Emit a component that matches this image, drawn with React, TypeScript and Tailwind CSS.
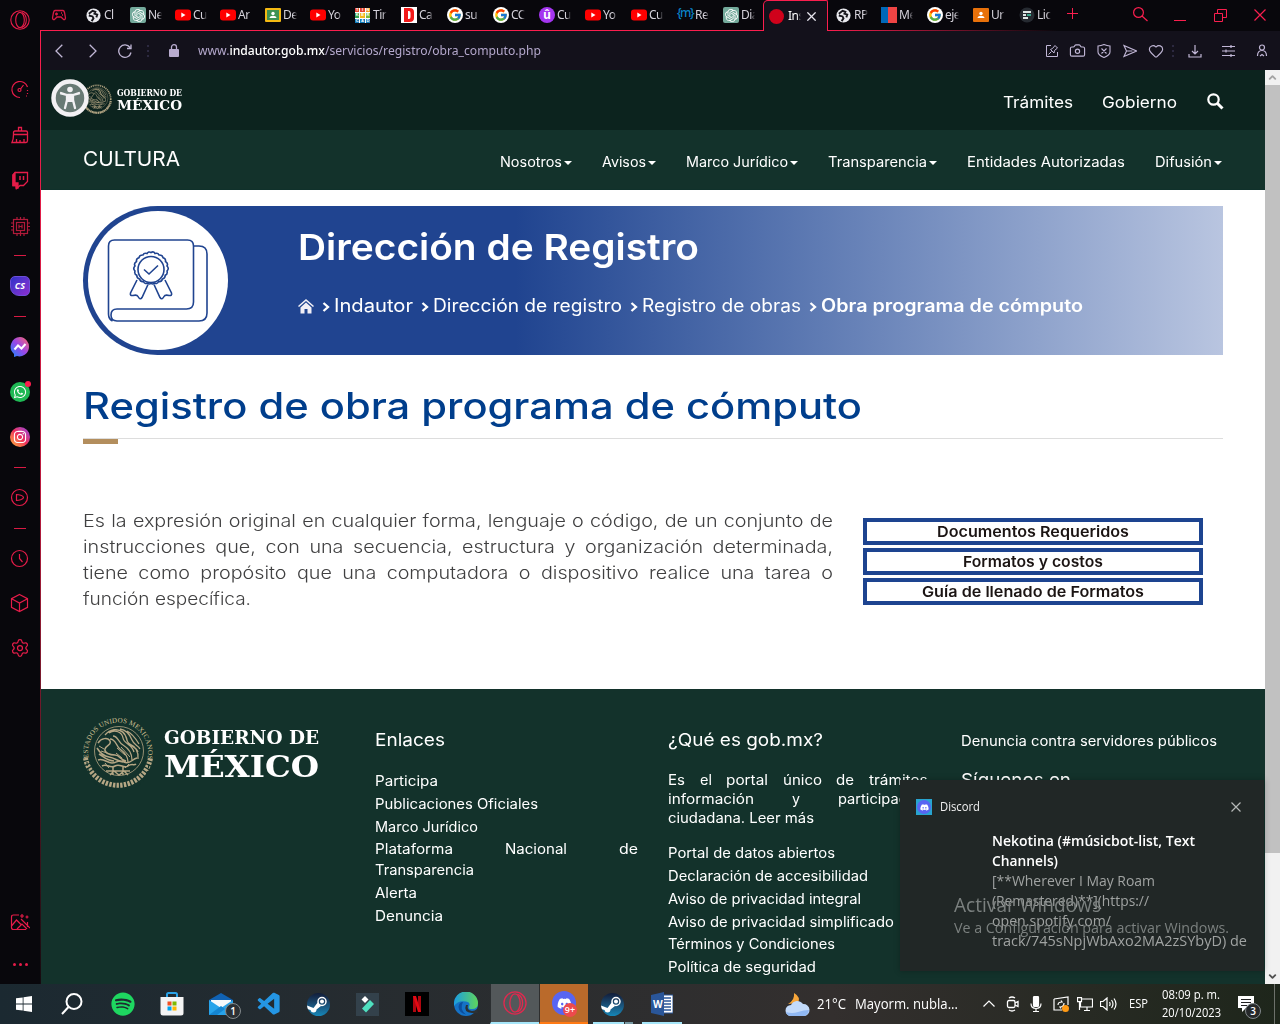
import React, { useLayoutEffect, useRef, useState } from 'react';
import { FaWhatsapp, FaInstagram, FaDiscord, FaSpotify } from 'react-icons/fa';
import { FcGoogle } from 'react-icons/fc';
import { SiOpenai } from 'react-icons/si';
import { VscVscode } from 'react-icons/vsc';
import { Box, Clock, Settings, Search, X, Plus, Heart, Camera, ChevronUp, ChevronDown } from 'lucide-react';

type Kids = { className?: string; children?: React.ReactNode };

/* One line of text stretched horizontally to the width of its box. */
function Fit({ className = '', children }: Kids) {
  const outer = useRef<HTMLSpanElement>(null);
  const inner = useRef<HTMLSpanElement>(null);
  const [k, setK] = useState(1);
  useLayoutEffect(() => {
    if (outer.current && inner.current && inner.current.offsetWidth > 0) {
      setK(outer.current.clientWidth / inner.current.getBoundingClientRect().width);
    }
  }, []);
  return (
    <span ref={outer} className={`block shrink-0 whitespace-nowrap ${className}`}>
      <span ref={inner} className="inline-block origin-left" style={{ transform: `scaleX(${k})` }}>{children}</span>
    </span>
  );
}

const OperaRing = ({ className = '' }: Kids) => (
  <svg viewBox="0 0 20 20" className={className} fill="none" stroke="currentColor" strokeWidth="1.1">
    <circle cx="10" cy="10" r="9.2" />
    <ellipse cx="10" cy="10" rx="4.3" ry="7.6" />
    <path d="M12 2.6c3 1.2 4.3 4.300 4.300 7.400s-1.300 6.200-4.300 7.400" />
  </svg>
);

const Seal = ({ className = '', words = false }: { className?: string; words?: boolean }) => (
  <svg viewBox="0 0 70 70" className={className} fill="none" stroke="#b5a684" strokeWidth="1">
    <defs><path id="rim" d="M5.500 40A30 30 0 1 1 64.500 40" /></defs>
    {words ? (
      <text fill="#d6c396" stroke="none" fontFamily="Liberation Serif" fontSize="7" textLength="106">
        <textPath href="#rim">ESTADOS UNIDOS MEXICANOS</textPath>
      </text>
    ) : <circle cx="35" cy="35" r="32" strokeWidth="4" strokeDasharray="2.500 2" />}
    <path d="M2.500 40A33 33 0 0 0 67.500 40" strokeWidth="5" strokeDasharray="2.400 1.300" />
    <path d="M4 44A31 31 0 0 0 66 44" stroke="#13322b" strokeWidth="1.200" strokeDasharray="4 3" />
    <circle cx="36" cy="33" r="24.500" strokeWidth=".8" />
    <path d="M22 17c5-6 13-7 18-3s2 10 7 12 9 8 8 15M26 15c6-4 13-1 14 5s9 6 11 14M31 12c7-1 12 4 13 10s9 6 11 12M37 11c7 1 10 6 12 11s6 5 8 9M30 18c5 0 5 6 10 9s9 8 9 15M27 21c6 0 6 7 10 10s8 7 8 13M44 13c6 3 9 8 12 13" strokeWidth="1.300" />
    <path d="M15 25c3-5 10-6 12-2s-4 4-5 8 5 6 10 6 5 5 11 6M14 30c3 5 6 8 12 9s8 4 14 5M16 36c5 3 8 7 15 7M15 42c6-2 9 3 14 3s6-4 12-1 8-3 13-4M19 48c5-3 8 3 13 0s9 3 13 0 6 0 8-2M23 53h24M27 57l4-4 5 4 5-4 4 4M30 49v8M40 49v8" strokeWidth="1.500" />
    <path d="M16 28l5 3M18 33l6 2M34 30l8 7M38 29l9 10M33 35l6 5M22 45l4 5M46 46l-4 4" />
  </svg>
);

const Rail = 'shrink-0 h-5 w-5 flex items-center justify-center';
const Dash = ({ className = '' }: Kids) => <i className={`block h-px w-3 shrink-0 bg-[#d81a44] ${className}`} />;

function Sidebar() {
  return (
    <aside className="flex w-10 shrink-0 flex-col items-center bg-[#08070c] pt-[10px] text-[#e51c49]">
      <div className={Rail}><OperaRing className="h-5 w-5" /></div>
      <div className={`${Rail} mt-[50px]`}>
        <svg viewBox="0 0 20 20" className="h-5 w-5" fill="none" stroke="currentColor" strokeWidth="1.200"><path d="M10 17.500A8 8 0 1 1 17.500 7" /><circle cx="9.500" cy="10" r="1.500" /><path d="M10.500 9l3-4M17.500 10v1M17.500 13v1M16 16h1" /></svg>
      </div>
      <div className={`${Rail} mt-[25px]`}>
        <svg viewBox="0 0 20 20" className="h-5 w-5" fill="none" stroke="currentColor" strokeWidth="1.300"><path d="M8.500 6V2.500h3V6M3.500 9.500V7.500q0-1.500 1.500-1.500h11q1.500 0 1.500 1.500v2zM3.500 9.500q0 5-1.500 8h14q1.500 0 1.500-2v-6M6.500 14v3.500M10 15v2.500M14 14v3.500" /></svg>
      </div>
      <div className={`${Rail} mt-[25px]`}>
        <svg viewBox="0 0 20 20" className="h-5 w-5" fill="none" stroke="currentColor" strokeWidth="1.300"><path d="M5 2.500h12.500v9l-4 4H10L6.500 18.500v-3H3V5z" /><path d="M3 5l2-2v10h3v5H6v-2.500H3z" fill="currentColor" /><path d="M10 6v4M13.500 6v4" strokeWidth="1.500" /></svg>
      </div>
      <div className={`${Rail} mt-[26px]`}>
        <svg viewBox="0 0 20 20" className="h-5 w-5" fill="none" stroke="#b01a3a" strokeWidth="1.200"><rect x="3.500" y="3.500" width="14" height="14" /><rect x="6.500" y="6.500" width="8" height="8" /><path d="M9 8.500v4M12 8.500v4M9 10.500h3M7 1v2M10.500 1v2M14 1v2M7 18v2M10.500 15v5M14 18v2M1 7h2M1 10.500h2M1 14h2M18 7h2M18 10.500h2M18 14h2" /></svg>
      </div>
      <Dash className="mt-[19px]" />
      <div className={`${Rail} mt-5 rounded-[5px] rounded-bl-[9px] border border-[#6d4fd8] bg-linear-to-br from-[#2b30c9] to-[#8b2bd0] font-['Open_Sans',sans-serif] text-[9px] font-bold text-white italic`}>CS</div>
      <Dash className="mt-5" />
      <div className={`${Rail} mt-5 text-[#7d5af5]`}>
        <svg viewBox="0 0 20 20" className="h-5 w-5"><defs><linearGradient id="msg" x1="0" y1="1" x2="1" y2="0"><stop offset="0" stopColor="#168aff" /><stop offset=".5" stopColor="#9a46e8" /><stop offset="1" stopColor="#ff6968" /></linearGradient></defs><path fill="url(#msg)" d="M10 0a9.700 9.700 0 1 1-3 19.100L4 20v-3A9.700 9.700 0 0 1 10 0z" /><path fill="none" stroke="#fff" strokeWidth="2" d="M4.500 12.500L8 8.500l3.500 3 4-4.500" /></svg>
      </div>
      <div className={`${Rail} relative mt-[25px] rounded-full bg-[#1fb955] text-[14px] text-white`}><FaWhatsapp /><i className="absolute -top-px -right-px h-[6px] w-[6px] rounded-full bg-[#fa1e4e]" /></div>
      <div className={`${Rail} mt-[25px] rounded-full bg-linear-to-tr from-[#ffb32c] via-[#ee2a58] to-[#9229e8] text-[14px] text-white`}><FaInstagram /></div>
      <Dash className="mt-5" />
      <div className={`${Rail} mt-5`}>
        <svg viewBox="0 0 20 20" className="h-5 w-5" fill="none" stroke="currentColor" strokeWidth="1.200"><circle cx="9.500" cy="9.500" r="8" /><path d="M6.500 6.500c2 0 7 1 7 3s-5 3-7 3z" /></svg>
      </div>
      <Dash className="mt-5" />
      <div className={`${Rail} mt-5`}>
        <svg viewBox="0 0 20 20" className="h-5 w-5" fill="none" stroke="currentColor" strokeWidth="1.200"><circle cx="9.500" cy="9.500" r="8" /><path d="M9.500 5v4.500l3 3.500" /></svg>
      </div>
      <div className={`${Rail} mt-6`}>
        <svg viewBox="0 0 20 20" className="h-5 w-5" fill="none" stroke="currentColor" strokeWidth="1.200"><path d="M9.500 1.500l8 4.200v8.600l-8 4.200-8-4.200V5.700zM1.500 5.700l8 4.300 8-4.300M9.500 10v8.500" /></svg>
      </div>
      <div className={`${Rail} mt-[25px]`}><Settings size={20} strokeWidth={1.500} /></div>
      <div className={`${Rail} mt-[254px]`}>
        <svg viewBox="0 0 20 20" className="h-5 w-5" fill="none" stroke="currentColor" strokeWidth="1.200"><path d="M9 3H3.500Q1.500 3 1.500 5v10.500q0 2 2 2H16M1.500 14l5-6 5 5M7 17l5-5 5 5M17.500 10v5M11 7l9 9M12 2v4M10 4h4M17 3.500v3M15.500 5h3" /></svg>
      </div>
      <div className={`${Rail} mt-[22px] gap-[3px]`}>
        <i className="h-[3px] w-[3px] rounded-full bg-[#e51c49]" /><i className="h-[3px] w-[3px] rounded-full bg-[#e51c49]" /><i className="h-[3px] w-[3px] rounded-full bg-[#e51c49]" />
      </div>
    </aside>
  );
}

const Globe = () => (
  <svg viewBox="0 0 16 16" className="h-[15px] w-[15px]"><circle cx="8" cy="8" r="7.500" fill="#e9e9ee" /><path d="M3 6l4-3 3 1-1 2 3 1-1 3M3 8l4 1 1 2-2 3" fill="none" stroke="#15141a" strokeWidth="2" /></svg>
);
const Tube = () => (
  <svg viewBox="0 0 16 16" className="h-4 w-4"><rect y="2.500" width="16" height="11" rx="3" fill="#f00" /><path d="M6.300 5.500v5l4.200-2.500z" fill="#fff" /></svg>
);
const Gpt = () => <span className="flex h-4 w-4 items-center justify-center rounded-[2px] bg-[#74aa9c] text-[13px] text-white"><SiOpenai /></span>;
const Goog = () => <span className="flex h-4 w-4 items-center justify-center rounded-full bg-white text-[14px]"><FcGoogle /></span>;
const Room = ({ alt = false }: { alt?: boolean }) => (
  <svg viewBox="0 0 16 16" className="h-4 w-4">
    <rect y="1" width="16" height="14" rx="1" fill={alt ? '#e8710a' : '#f4b913'} />
    <rect x="2" y="3" width="12" height="10" fill={alt ? '#e8710a' : '#3f9254'} />
    <circle cx="8" cy="6.500" r="1.700" fill="#fff" /><path d="M4.500 11c.3-3 6.700-3 7 0z" fill="#fff" />
  </svg>
);
const Tinker = () => (
  <span className="grid h-[15px] w-[15px] grid-cols-3 gap-px bg-white font-['Liberation_Sans',sans-serif] text-[4px] leading-[4.500px] font-bold text-white">
    <i className="bg-[#e6452f] text-center not-italic">T</i><i className="bg-[#e6452f] text-center not-italic">I</i><i className="bg-[#f39a1d] text-center not-italic">N</i>
    <i className="bg-[#34a353] text-center not-italic">K</i><i className="bg-[#f3b91d] text-center not-italic">E</i><i className="bg-[#7ab83a] text-center not-italic">R</i>
    <i className="bg-[#1579b8] text-center not-italic">C</i><i className="bg-[#1579b8] text-center not-italic">A</i><i className="bg-[#1579b8] text-center not-italic">D</i>
  </span>
);
const DBox = () => (
  <svg viewBox="0 0 16 16" className="h-4 w-4"><rect width="16" height="16" fill="#fff" /><path d="M3 1h5.500Q13 1 13 5v6q0 4-4.500 4H3zM7 4v8h1q1.500 0 1.500-2V6Q9.500 4 8 4z" fill="#f21a1a" /></svg>
);
const UIcon = () => <span className="flex h-4 w-4 items-center justify-center rounded-full bg-[#a435f0] font-['Inter',sans-serif] text-[12px] font-bold text-white">û</span>;
const MIcon = () => <span className="flex h-4 w-4 items-center justify-center pb-1 font-['Noto_Sans',sans-serif] text-[12px] font-medium tracking-[-1.500px] text-[#0a84c8]">{'{m}'}</span>;
const Flag = () => <span className="flex h-4 w-4"><i className="flex-1 bg-[#0068b8]" /><i className="w-[9px] bg-[#ef4444]" /></span>;
const Lic = () => (
  <svg viewBox="0 0 16 16" className="h-4 w-4"><circle cx="8" cy="8" r="7.500" fill="#262a31" /><path d="M4 5h8M4 8h3M4 11h5" stroke="#dfe6e6" strokeWidth="1.800" /><path d="M8 8h4" stroke="#3aa58c" strokeWidth="2" /></svg>
);

function Tab({ icon, text, className }: { icon: React.ReactNode; text: string; className: string }) {
  return (
    <div className={`flex h-[30px] shrink-0 items-center ${className}`}>
      <span className="flex w-4 shrink-0 items-center justify-start">{icon}</span>
      <span className="ml-[2px] h-[16px] w-[14px] overflow-hidden mask-r-from-70% font-['Noto_Sans',sans-serif] text-[12px] leading-[16px] tracking-[-0.500px] whitespace-nowrap text-[#d4d1da]">{text}</span>
    </div>
  );
}

function TabStrip() {
  return (
    <div className="flex h-[31px] shrink-0 bg-[#08070c]">
      <div className="flex w-[722px] shrink-0 border-b border-[#fa1e4e] pl-[10px]">
        <svg viewBox="0 0 16 14" className="mt-[8px] mr-[19px] h-[14px] w-4 shrink-0" fill="none" stroke="#d81a44" strokeWidth="1.300"><path d="M4 2.500h8q1 0 1.500 2l1 5.500q-.2 2-2 1.500L10 9H6l-2.500 2.500q-1.800.5-2-1.500l1-5.500q.5-2 1.500-2z" /><path d="M4 6h3M5.500 4.500v3M10 5h1M11 7h1" /></svg>
        <Tab className="w-[44px]" icon={<Globe />} text="Cl" />
        <Tab className="w-[45px]" icon={<Gpt />} text="Ne" />
        <Tab className="w-[45px]" icon={<Tube />} text="Cu" />
        <Tab className="w-[45px]" icon={<Tube />} text="Ar" />
        <Tab className="w-[45px]" icon={<Room />} text="De" />
        <Tab className="w-[45px]" icon={<Tube />} text="Yo" />
        <Tab className="w-[46px]" icon={<Tinker />} text="Tir" />
        <Tab className="w-[46px]" icon={<DBox />} text="Ca" />
        <Tab className="w-[46px]" icon={<Goog />} text="su" />
        <Tab className="w-[46px]" icon={<Goog />} text="CC" />
        <Tab className="w-[46px]" icon={<UIcon />} text="Cu" />
        <Tab className="w-[46px]" icon={<Tube />} text="Yo" />
        <Tab className="w-[46px]" icon={<Tube />} text="Cu" />
        <Tab className="w-[46px]" icon={<MIcon />} text="Re" />
        <Tab className="w-[40px]" icon={<Gpt />} text="Dia" />
      </div>
      <div className="relative flex w-[65px] shrink-0 items-center rounded-tl-[5px] rounded-tr-[2px] border-x border-t border-[#fa1e4e] bg-[#13111b] pl-[5px]">
        <i className="h-[15px] w-[15px] shrink-0 rounded-full bg-[#d0021b]" />
        <span className="ml-[4px] h-[16px] w-[13px] shrink-0 overflow-hidden mask-r-from-70% font-['Noto_Sans',sans-serif] text-[12px] leading-[16px] tracking-[-0.500px] text-white">Ins</span>
        <X size={15} strokeWidth={2} className="ml-[3px] shrink-0 text-[#e8e6ee]" />
      </div>
      <div className="flex flex-1 flex-col">
        <div className="flex h-[30px] pl-2 text-[#fa1e4e]">
          <Tab className="w-[45px]" icon={<Globe />} text="RP" />
          <Tab className="w-[46px]" icon={<Flag />} text="Me" />
          <Tab className="w-[46px]" icon={<Goog />} text="eje" />
          <Tab className="w-[46px]" icon={<Room alt />} text="Ur" />
          <Tab className="w-[46px]" icon={<Lic />} text="Lic" />
          <svg viewBox="0 0 11 11" className="mt-[8px] ml-[2px] h-[11px] w-[11px] shrink-0" stroke="currentColor"><path d="M5.500 0v11M0 5.500h11" /></svg>
          <svg viewBox="0 0 15 15" className="mt-[7px] ml-[55px] h-[15px] w-[15px] shrink-0" fill="none" stroke="currentColor" strokeWidth="1.200"><circle cx="5.500" cy="5.500" r="4.900" /><path d="M9 9l5.500 5" /></svg>
          <i className="mt-5 ml-[26px] h-px w-3 shrink-0 bg-[#fa1e4e]" />
          <svg viewBox="0 0 13 13" className="mt-[9px] ml-[28px] h-[13px] w-[13px] shrink-0" fill="none" stroke="currentColor"><path d="M.5 4.500h8v8h-8zM3.500 4V.5h9v8H9" /></svg>
          <svg viewBox="0 0 12 12" className="mt-[9px] ml-[27px] h-3 w-3 shrink-0" stroke="currentColor" strokeWidth="1.200"><path d="M.5.500l11 11M11.500.500l-11 11" /></svg>
        </div>
        <i className="block h-px w-[230px] bg-linear-to-r from-[#fa1e4e] to-[#fa1e4e00]" />
      </div>
    </div>
  );
}

const Dots = ({ className = '' }: Kids) => (
  <span className={`flex shrink-0 flex-col gap-[3px] ${className}`}><i className="h-[2px] w-[2px] bg-[#2c2940]" /><i className="h-[2px] w-[2px] bg-[#2c2940]" /><i className="h-[2px] w-[2px] bg-[#2c2940]" /></span>
);

function Toolbar() {
  return (
    <div className="flex h-[39px] shrink-0 items-center bg-[#13111b] pl-[14px] text-[#c1b7d6]">
      <svg viewBox="0 0 8 14" className="h-[14px] w-2 shrink-0" fill="none" stroke="currentColor" strokeWidth="1.300"><path d="M7.300.700L1 7l6.300 6.300" /></svg>
      <svg viewBox="0 0 8 14" className="ml-[26px] h-[14px] w-2 shrink-0" fill="none" stroke="currentColor" strokeWidth="1.300"><path d="M.700.700L7 7 .700 13.300" /></svg>
      <svg viewBox="0 0 14 14" className="ml-[21px] h-[14px] w-[14px] shrink-0" fill="none" stroke="currentColor" strokeWidth="1.300"><path d="M12 3.500A6.200 6.200 0 1 0 13 8.500M13 .5V4.500H9" /></svg>
      <Dots className="ml-[15px]" />
      <svg viewBox="0 0 10 13" className="ml-[20px] h-[13px] w-[10px] shrink-0"><rect y="5" width="10" height="8" rx="1" fill="#b9accf" /><path d="M2.500 5V3a2.500 2.300 0 0 1 5 0v2" fill="none" stroke="#b9accf" strokeWidth="1.300" /></svg>
      <Fit className="-mt-[2px] ml-[19px] w-[343px] font-['Noto_Sans',sans-serif] text-[13px] leading-5 text-[#b4a8cc]">www.<b className="font-medium text-white">indautor.gob.mx</b>/servicios/registro/obra_computo.php</Fit>
      <svg viewBox="0 0 14 14" className="ml-[504px] h-[14px] w-[14px] shrink-0" fill="none" stroke="currentColor"><path d="M6 1.500H1.500v11h11V8M3.500 10.500l3-3M5.500 5.500l3.500 3.500.5-2.500 3-2.500-2.500-2.500L7.500 4.500z" /></svg>
      <Camera size={17} strokeWidth={1.600} className="ml-[10px] shrink-0" />
      <svg viewBox="0 0 14 14" className="ml-[11px] h-[14px] w-[14px] shrink-0" fill="none" stroke="currentColor" strokeWidth="1.100"><path d="M1 2q3-.3 6-1.500Q10 1.700 13 2v6q0 3-6 5.500Q1 11 1 8zM4.500 4.500l5 5M9.500 4.500l-5 5" /></svg>
      <svg viewBox="0 0 14 14" className="ml-[12px] h-[14px] w-[14px] shrink-0" fill="none" stroke="currentColor" strokeWidth="1.100"><path d="M1 1.500L13.500 7 1 12.500 3.500 7zM3.500 7h6" /></svg>
      <Heart size={16} strokeWidth={1.700} className="ml-[11px] shrink-0" />
      <Dots className="ml-[8px]" />
      <svg viewBox="0 0 14 14" className="ml-[14px] h-[14px] w-[14px] shrink-0" fill="none" stroke="currentColor" strokeWidth="1.200"><path d="M7 1v9M4 7l3 3 3-3M1 10v3h12v-3" /></svg>
      <svg viewBox="0 0 13 12" className="ml-[20px] h-3 w-[13px] shrink-0" fill="none" stroke="currentColor" strokeWidth="1.200"><path d="M0 1.500h13M0 6h13M0 10.500h13M9 0v3M4 4.500v3M9 9v3" /></svg>
      <svg viewBox="0 0 12 13" className="ml-[21px] h-[13px] w-3 shrink-0" fill="none" stroke="currentColor" strokeWidth="1.200"><circle cx="6" cy="3.500" r="2.500" /><path d="M1.500 12q0-5.500 4.500-5.500t4.500 5.500M4 12l2-1.500L8 12" /></svg>
    </div>
  );
}

const Caret = () => <i className="mt-[2px] ml-[2px] block h-0 w-0 shrink-0 border-x-4 border-t-4 border-x-transparent border-t-white" />;

function SiteHeader() {
  return (
    <>
      <header className="flex h-[60px] shrink-0 bg-[#0c231e] pl-[10px] text-[16px] leading-5 text-white">
        <div className="relative mt-[9px] h-[38px] w-[38px] shrink-0">
          <svg viewBox="0 0 38 38" className="relative z-10 h-[38px] w-[38px]"><circle cx="19" cy="19" r="16.500" fill="#697a75" stroke="#f3f1f4" strokeWidth="4.500" /><circle cx="19" cy="10.500" r="2.800" fill="#f3f1f4" /><path d="M10 14l6 2v5l-2 8M28 14l-6 2v5l2 8M10 14.500l6.500 1.500h5L28 14.500" fill="none" stroke="#f3f1f4" strokeWidth="2.300" strokeLinecap="round" /><path d="M15.500 15h7v8h-7z" fill="#f3f1f4" /></svg>
        </div>
        <Seal className="mt-[14px] -ml-[7px] h-[30px] w-[30px] shrink-0" />
        <div className="ml-[5px] pt-[17px] font-['DejaVu_Serif',serif] font-bold">
          <Fit className="h-[12px] w-[65px] text-[8.500px] leading-[12px]">GOBIERNO DE</Fit>
          <Fit className="h-[14px] w-[65px] text-[13px] leading-[13px]">MÉXICO</Fit>
        </div>
        <Fit className="mt-[22px] ml-[821px] w-[70px]">Trámites</Fit>
        <Fit className="mt-[22px] ml-[29px] w-[75px]">Gobierno</Fit>
        <svg viewBox="0 0 17 17" className="mt-[23px] ml-[30px] h-[17px] w-[17px] shrink-0" fill="none" stroke="#fff"><circle cx="6.500" cy="6.500" r="5.200" strokeWidth="2.200" /><path d="M10.500 10.500l5 5" strokeWidth="3" /></svg>
      </header>
      <nav className="flex h-[60px] shrink-0 items-center border-b border-[#10312b] bg-[#13322b] pt-[5px] pl-[42px] text-[14px] leading-5 text-white">
        <Fit className="-mt-[7px] w-[97px] text-[20px]">CULTURA</Fit>
        <Fit className="ml-[320px] w-[62px]">Nosotros</Fit><Caret />
        <Fit className="ml-[30px] w-[44px]">Avisos</Fit><Caret />
        <Fit className="ml-[30px] w-[102px]">Marco Jurídico</Fit><Caret />
        <Fit className="ml-[30px] w-[99px]">Transparencia</Fit><Caret />
        <Fit className="ml-[30px] w-[158px]">Entidades Autorizadas</Fit>
        <Fit className="ml-[30px] w-[57px]">Difusión</Fit><Caret />
      </nav>
    </>
  );
}

const Arrow = ({ className = '' }: Kids) => (
  <svg viewBox="0 0 8 10" className={`mt-[2px] h-[10px] w-2 shrink-0 ${className}`} fill="none" stroke="#fff" strokeWidth="2.300"><path d="M1.500 1L6 5 1.500 9" /></svg>
);

const BookBadge = () => (
  <svg viewBox="0 0 140 139" className="mt-[5px] ml-[5px] h-[139px] w-[140px] shrink-0" fill="none" stroke="#204490" strokeWidth="1.600">
    <ellipse cx="70" cy="69.500" rx="70" ry="69.500" fill="#fff" stroke="none" />
    <path d="M20.500 103V35q0-6 6-6h73q6 0 6 6v56q0 7-7 7H29q-6 0-6 6t6 6h82q8 0 8-8V43q0-8-8-8h-5M20.500 103q0 5 4 7" />
    <circle cx="63" cy="58.500" r="13" />
    <path d="M63 41.500q2.500-1.500 4 1 3-1 4 1.500 3.500-.3 4 2.700 3 .8 2.500 3.800 3 2 1.500 4.500 2.500 2.500 0 5 1 3-1.800 4.200.2 3.200-2.800 3.800-.8 3-3.800 2.500-1.500 3-4 1.500-2 2-3.600 0-1.600 2-3.600 0-2.500 1.500-4-1.500-3 .5-3.800-2.500-3-.6-2.800-3.800-2.800-1.200-1.800-4.200-2.500-2.500 0-5-1.500-2.500 1.500-4.500-.5-3 2.500-3.800.5-3 4-2.700 1-2.500 4-1.500 1.500-2.500 4-1z" />
    <path d="M56 58.500l5 4.500 9-8.500M49 69l-6.500 13q-.8 3 2.500 2.500 4-1 5 1 2 4 4 1l6-13M77 69l6.500 13q.8 3-2.500 2.500-4-1-5 1-2 4-4 1l-6-13" />
  </svg>
);

function MainContent() {
  return (
    <main className="h-[499px] shrink-0 bg-white pr-[42px] pl-[42px]">
      <div className="pt-4">
        <section className="flex h-[149px] rounded-l-[75px] bg-linear-to-r from-[#204490] from-38% to-[#b9c5e0]">
          <BookBadge />
          <div className="ml-[71px] pt-[21px] text-white">
            <Fit className="-ml-px w-[401px] text-[36px] leading-10 font-semibold">Dirección de Registro</Fit>
            <div className="mt-[29px] -ml-px flex items-center text-[18px] leading-5">
              <svg viewBox="0 0 16 15" className="mt-px h-[15px] w-4 shrink-0" fill="#f1eff6"><path d="M8 0l8 7-1 1-7-6-7 6-1-1z" /><path d="M2.500 8.500L8 3.500l5.500 5V14.500H9.500V10h-3v4.500h-4z" /></svg>
              <Arrow className="ml-[8px]" /><Fit className="ml-[4px] w-[79px]">Indautor</Fit>
              <Arrow className="ml-[8px]" /><Fit className="ml-[4px] w-[189px]">Dirección de registro</Fit>
              <Arrow className="ml-[8px]" /><Fit className="ml-[4px] w-[159px]">Registro de obras</Fit>
              <Arrow className="ml-[8px]" /><Fit className="ml-[4px] w-[262px] font-semibold">Obra programa de cómputo</Fit>
            </div>
          </div>
        </section>
      </div>
      <Fit className="mt-[31px] h-10 w-[779px] text-[36.500px] leading-10 font-medium text-[#003e8c]">Registro de obra programa de cómputo</Fit>
      <div className="mt-3 h-px bg-[#dddddd]" />
      <div className="h-[5px] w-[35px] bg-[#b38e5d]" />
      <div className="mt-[64px] flex">
        <div className="w-[750px] shrink-0 text-[17.500px] leading-[26px] font-light text-[#404041]">
          {['Es la expresión original en cualquier forma, lenguaje o código, de un conjunto de', 'instrucciones que, con una secuencia, estructura y organización determinada,', 'tiene como propósito que una computadora o dispositivo realice una tarea o'].map((l) => (
            <p key={l} className="w-[665px] origin-left scale-x-[1.1278] text-justify whitespace-nowrap [text-align-last:justify]">{l}</p>
          ))}
          <Fit className="w-[168px]">función específica.</Fit>
        </div>
        <div className="mt-[10px] ml-[30px] flex w-[340px] flex-col gap-[3px] text-[15px] leading-[19px] font-semibold text-[#1b1413]">
          <div className="flex h-[27px] justify-center border-4 border-[#1d4490]"><Fit className="w-[192px]">Documentos Requeridos</Fit></div>
          <div className="flex h-[27px] justify-center border-4 border-[#1d4490]"><Fit className="w-[140px]">Formatos y costos</Fit></div>
          <div className="flex h-[27px] justify-center border-4 border-[#1d4490]"><Fit className="w-[222px]">Guía de llenado de Formatos</Fit></div>
        </div>
      </div>
    </main>
  );
}

function SiteFooter() {
  return (
    <footer className="flex h-[295px] shrink-0 overflow-hidden bg-[#13322b] pl-[42px] text-[14px] leading-5 text-white">
      <div className="flex w-[292px] shrink-0">
        <Seal words className="mt-[29px] h-[70px] w-[70px] shrink-0" />
        <div className="ml-[11px] pt-[39px] font-['DejaVu_Serif',serif] font-bold">
          <Fit className="h-5 w-[155px] text-[18.500px] leading-5">GOBIERNO DE</Fit>
          <Fit className="mt-[2px] w-[155px] text-[30px] leading-[34px]">MÉXICO</Fit>
        </div>
      </div>
      <div className="w-[293px] shrink-0 pt-[41px]">
        <Fit className="w-[70px] text-[17.500px]">Enlaces</Fit>
        <Fit className="mt-[21px] w-[63px]">Participa</Fit>
        <Fit className="mt-[3px] w-[163px]">Publicaciones Oficiales</Fit>
        <Fit className="mt-[3px] w-[103px]">Marco Jurídico</Fit>
        <div className="mt-[2px] flex w-[263px] justify-between"><Fit className="w-[78px]">Plataforma</Fit><Fit className="w-[62px]">Nacional</Fit><Fit className="w-[19px]">de</Fit></div>
        <Fit className="mt-px w-[99px]">Transparencia</Fit>
        <Fit className="mt-[3px] w-[42px]">Alerta</Fit>
        <Fit className="mt-[3px] w-[68px]">Denuncia</Fit>
      </div>
      <div className="w-[293px] shrink-0 pt-[41px]">
        <Fit className="w-[155px] text-[17.500px]">¿Qué es gob.mx?</Fit>
        <div className="mt-5 flex h-[19px] w-[264px] justify-between leading-[19px]"><Fit className="w-[17px]">Es</Fit><Fit className="w-[12px]">el</Fit><Fit className="w-[42px]">portal</Fit><Fit className="w-[39px]">único</Fit><Fit className="w-[18px]">de</Fit><Fit className="w-[63px]">trámites,</Fit></div>
        <div className="flex h-[19px] w-[260px] justify-between leading-[19px]"><Fit className="w-[86px]">información</Fit><Fit className="w-[8px]">y</Fit><Fit className="w-[90px]">participación</Fit></div>
        <Fit className="w-[146px] leading-[19px]">ciudadana. Leer más</Fit>
        <Fit className="mt-4 w-[167px]">Portal de datos abiertos</Fit>
        <Fit className="mt-[3px] w-[200px]">Declaración de accesibilidad</Fit>
        <Fit className="mt-[3px] w-[193px]">Aviso de privacidad integral</Fit>
        <Fit className="mt-[3px] w-[226px]">Aviso de privacidad simplificado</Fit>
        <Fit className="mt-[2px] w-[167px]">Términos y Condiciones</Fit>
        <Fit className="mt-[3px] w-[148px]">Política de seguridad</Fit>
      </div>
      <div className="shrink-0 pt-[42px]">
        <Fit className="w-[256px]">Denuncia contra servidores públicos</Fit>
        <Fit className="mt-[19px] w-[110px] text-[17.500px]">Síguenos en</Fit>
      </div>
    </footer>
  );
}

function Toast() {
  return (
    <div className="absolute top-[780px] left-[900px] h-[191px] w-[364px] bg-[#212726] font-['Open_Sans',sans-serif] text-[15px] leading-5 text-[#a0a3a2] shadow-[0_0_6px_rgba(0,0,0,0.25)]">
      <div className="flex h-[51px] items-center pt-[3px] pl-4">
        <span className="flex h-4 w-4 shrink-0 items-center justify-center bg-[#28a4d0]"><span className="flex h-[14px] w-[14px] items-center justify-center rounded-full bg-[#5865f2] text-[9px] text-white"><FaDiscord /></span></span>
        <Fit className="-mt-px ml-2 w-10 text-[12px] text-[#f1f1f1]">Discord</Fit>
        <svg viewBox="0 0 10 10" className="ml-[251px] h-[10px] w-[10px]" stroke="#b5b8b7" strokeWidth="1.200"><path d="M.5.500l9 9M9.500.500l-9 9" /></svg>
      </div>
      <div className="-mt-px pl-[92px]">
        <Fit className="w-[203px] font-semibold text-white">Nekotina (#músicbot-list, Text</Fit>
        <Fit className="w-[66px] font-semibold text-white">Channels)</Fit>
        <Fit className="w-[163px]">[**Wherever I May Roam</Fit>
        <Fit className="w-[157px]">(Remastered)**](https://</Fit>
        <Fit className="w-[119px]">open.spotify.com/</Fit>
        <Fit className="w-[255px]">track/745sNpjWbAxo2MA2zSYbyD) de</Fit>
      </div>
      <div className="absolute top-[112px] left-[54px] text-[#7b807f]">
        <Fit className="w-[147px] text-[20px] leading-[25px]">Activar Windows</Fit>
        <Fit className="w-[275px] text-[15px] leading-5">Ve a Configuración para activar Windows.</Fit>
      </div>
    </div>
  );
}

const cell = 'relative flex h-10 w-[49px] shrink-0 items-center justify-center';

const SteamIcon = () => (
  <span className="flex h-[23px] w-[23px] items-center justify-center overflow-hidden rounded-full bg-linear-to-b from-[#111d3a] to-[#1387b8] text-white">
    <svg viewBox="0 0 23 23" className="h-[23px] w-[23px]"><circle cx="15" cy="8.500" r="4" fill="none" stroke="#fff" strokeWidth="1.500" /><circle cx="15" cy="8.500" r="2" fill="#fff" /><path d="M0 12.500l6.500 2.500 4.500-6 1 2 2 2-4.500 3.500q0 3-3 3-2.500 0-3-2.500L0 16z" fill="#fff" /></svg>
  </span>
);

function Taskbar() {
  return (
    <div className="flex h-10 shrink-0 bg-linear-to-r from-[#1b2931] via-[#332f2e] via-65% to-[#1e261b] font-['Open_Sans',sans-serif] text-white">
      <div className={`${cell} pr-[2px]`}>
        <svg viewBox="0 0 16 16" className="h-4 w-4" fill="#fff"><path d="M0 2.300l6.700-.9v6.200H0zM7.500 1.200L16 0v7.600H7.500zM0 8.400h6.700v6.200L0 13.700zM7.500 8.400H16V16l-8.500-1.200z" /></svg>
      </div>
      <div className={`${cell} pr-[3px]`}>
        <svg viewBox="0 0 22 22" className="h-[22px] w-[22px]" fill="none" stroke="#fff" strokeWidth="2"><circle cx="13" cy="8.500" r="7.500" /><path d="M7.500 14L1 21" /></svg>
      </div>
      <div className={`${cell} text-[24px] text-[#1ed760]`}><FaSpotify /></div>
      <div className={cell}>
        <svg viewBox="0 0 24 24" className="h-6 w-6"><path d="M7 6V2.500Q7 1 8.500 1h7Q17 1 17 2.500V6" fill="none" stroke="#2aa3e8" strokeWidth="2" /><path d="M.5 5h23v16q0 2.500-2.500 2.500H3Q.500 23.500.5 21z" fill="#f4f4f4" /><path d="M7.500 9.500h4v4h-4z" fill="#f25022" /><path d="M12.500 9.500h4v4h-4z" fill="#7fba00" /><path d="M7.500 14.500h4v4h-4z" fill="#00a4ef" /><path d="M12.500 14.500h4v4h-4z" fill="#ffb900" /></svg>
      </div>
      <div className={cell}>
        <svg viewBox="0 0 24 24" className="h-6 w-6"><path d="M0 8L12 1l12 7v4H0z" fill="#1062b3" /><path d="M2 8h20v9H2z" fill="#f5f8fb" /><path d="M0 8l12 8 12-8v15H0z" fill="#27a3ea" /><path d="M0 23l12-9 4 3-8 6z" fill="#1485d1" /></svg>
        <span className="absolute top-[19px] left-[29px] flex h-4 w-4 items-center justify-center rounded-full border border-[#83898c] bg-[#2b3135] text-[10px] font-semibold">1</span>
      </div>
      <div className={`${cell} text-[27px] text-[#2496e4]`}><VscVscode /></div>
      <div className={cell}><SteamIcon /></div>
      <div className={cell}>
        <svg viewBox="0 0 23 23" className="h-[23px] w-[23px]"><rect width="23" height="23" fill="#33414b" /><path d="M9 3l3.500 3.500L9 10 5.500 6.500z" fill="#fff" /><path d="M14 7l4 4-8 8.500L6 15.500z" fill="#4fe0c0" /></svg>
      </div>
      <div className={cell}>
        <svg viewBox="0 0 24 24" className="h-6 w-6"><rect width="24" height="24" fill="#000" /><path d="M8 4h3v16H8zM13 4h3v16h-3z" fill="#b1060f" /><path d="M8 4h3l5 16h-3z" fill="#e50914" /></svg>
      </div>
      <div className={cell}>
        <svg viewBox="0 0 24 24" className="h-6 w-6"><defs><linearGradient id="edge"><stop stopColor="#1b9de2" /><stop offset="1" stopColor="#5fd45a" /></linearGradient></defs><circle cx="12" cy="12" r="12" fill="#1572c6" /><path d="M0 12A12 12 0 0 1 24 11q0 6-6 6-4 0-3-2.500 2-4-3-5Q4 8 0 14z" fill="url(#edge)" /><path d="M9 10q-4 7 3 12.500Q5 21 4.500 15 5 10 9 10z" fill="#0c4f9e" /><path d="M14 13q-2 5 4 6 3 0 5-2l1 4h-6q-9-1-6-8z" fill="#2b3134" /></svg>
      </div>
      <div className={`${cell} border-b-2 border-l border-b-[#a5e5f8] border-l-[#2b2f31] bg-[#53585a] text-[#e0294f]`}><OperaRing className="h-6 w-6" /></div>
      <div className={`${cell} border-b-2 border-l border-b-[#ff7a14] border-l-[#2e2e2e] bg-[#ba6a2b]`}>
        <span className="flex h-6 w-6 items-center justify-center rounded-full bg-[#5865f2] text-[15px]"><FaDiscord /></span>
        <span className="absolute top-[19px] left-[23px] flex h-[14px] w-[14px] items-center justify-center rounded-full bg-[#ed4a4d] text-[9px] font-semibold">9+</span>
      </div>
      <div className={cell}><SteamIcon /><i className="absolute bottom-0 left-[5px] h-[2px] w-[31px] bg-[#a5e5f8]" /><i className="absolute bottom-0 left-[37px] h-[2px] w-2 bg-[#7798a2]" /></div>
      <div className={cell}>
        <svg viewBox="0 0 22 24" className="h-6 w-[22px]"><path d="M12 3h10v18H12z" fill="#fff" stroke="#2a5699" /><path d="M13 6h7M13 9h7M13 12h7M13 15h7M13 18h7" stroke="#2a5699" strokeWidth="1.300" /><path d="M0 3l13-3v24L0 21z" fill="#2a5699" /><text x="2" y="16" fontSize="10" fontWeight="bold" fontFamily="Open Sans" fill="#fff">W</text></svg>
        <i className="absolute bottom-0 left-[5px] h-[2px] w-10 bg-[#a5e5f8]" />
      </div>
      <svg viewBox="0 0 25 25" className="mt-[8px] ml-[99px] h-[25px] w-[25px] shrink-0"><path d="M9 1q7 4 4 10L3 12q7-4 6-11z" fill="#f7a63a" /><path d="M6 24a5.500 5.500 0 0 1 0-11 7 7 0 0 1 12-1 6 6 0 0 1 1 12z" fill="#c3dafa" /><path d="M1 20q6 2 12 0t11-2q-1 6-6 6H6q-4 0-5-4z" fill="#90b8f3" /></svg>
      <Fit className="mt-[10px] ml-[7px] w-[29px] text-[14px] leading-5">21°C</Fit>
      <Fit className="mt-[10px] ml-[9px] w-[103px] text-[14px] leading-5">Mayorm. nubla...</Fit>
      <svg viewBox="0 0 12 7" className="mt-[16px] ml-[25px] h-[7px] w-3 shrink-0" fill="none" stroke="#fff" strokeWidth="1.200"><path d="M.5 6.500L6 1l5.500 5.500" /></svg>
      <svg viewBox="0 0 14 16" className="mt-3 ml-[11px] h-4 w-[14px] shrink-0" fill="none" stroke="#fff" strokeWidth="1.300"><rect x="1.500" y="4.500" width="7.500" height="7" rx="1.500" /><path d="M9 7l3-1.500v5L9 9M3 2Q6 0 9 2M3 14q3 2 6 0" /></svg>
      <svg viewBox="0 0 12 16" className="mt-3 ml-[10px] h-4 w-3 shrink-0" fill="none" stroke="#fff" strokeWidth="1.200"><rect x="3.500" y=".5" width="5" height="10" rx="1" fill="#fff" /><path d="M1 7.500q0 5 5 5t5-5M6 12.500v3M3 15.500h6" /></svg>
      <span className="relative mt-3 ml-[11px] block h-4 w-4 shrink-0">
        <svg viewBox="0 0 16 16" className="h-4 w-4" fill="none" stroke="#fff" strokeWidth="1.200"><path d="M1 3l14-2v8M1 3v11h8M5 9q0-3 4-3l-1-1.500M11 7q0 4-4 4l1 1.500" /></svg>
        <i className="absolute top-[9px] left-[9px] h-[7px] w-[7px] rounded-full bg-[#ff9a14]" />
      </span>
      <svg viewBox="0 0 16 15" className="mt-[13px] ml-[8px] h-[15px] w-4 shrink-0" fill="none" stroke="#fff" strokeWidth="1.200"><path d="M5 2h10.500v8H3.500V5M7 13.500h6M10 10v3.500M.5.600h4v4h-4zM2.500 5v8" /></svg>
      <svg viewBox="0 0 17 14" className="mt-[13px] ml-[7px] h-[14px] w-[17px] shrink-0" fill="none" stroke="#fff" strokeWidth="1.200"><path d="M.5 4.500h2.500l4-3.500v12l-4-3.500H.500zM9.500 5q1.200 2 0 4M11.500 3q3 4 0 8M14 1.500q4 5.500 0 11" /></svg>
      <Fit className="mt-[10px] ml-[12px] w-[19px] text-[12px] leading-5">ESP</Fit>
      <div className="mt-[2px] ml-[14px] w-[60px] shrink-0 text-[12px] leading-[18px]">
        <Fit className="w-[58px]">08:09 p. m.</Fit>
        <Fit className="w-[59px]">20/10/2023</Fit>
      </div>
      <div className="relative mt-[11px] ml-[16px] h-[18px] w-4 shrink-0">
        <svg viewBox="0 0 16 18" className="h-[18px] w-4"><path d="M0 1h16v12H8l-4 4v-4H0z" fill="#fff" /><path d="M3 4.500h10M3 7.500h10M3 10.500h6" stroke="#222" strokeWidth="1.200" /></svg>
        <span className="absolute top-2 left-[7px] flex h-4 w-4 items-center justify-center rounded-full border border-[#83898c] bg-[#26292a] text-[10px] font-semibold">3</span>
      </div>
      <i className="ml-[20px] h-10 w-px shrink-0 bg-[#6d716b]" />
    </div>
  );
}

export default function App() {
  return (
    <div className="relative flex h-[1024px] w-[1280px] flex-col overflow-hidden bg-[#08070c] font-['Inter',sans-serif]">
      <div className="flex h-[984px] shrink-0">
        <Sidebar />
        <i className="mt-[30px] w-px shrink-0 bg-linear-to-b from-[#fa1e4e] via-[#b81a3e] via-50% to-[#160a10]" />
        <div className="flex w-[1239px] shrink-0 flex-col">
          <TabStrip />
          <Toolbar />
          <div className="flex h-[914px]">
            <div className="flex w-[1224px] shrink-0 flex-col">
              <SiteHeader />
              <MainContent />
              <SiteFooter />
            </div>
            <div className="flex w-[15px] flex-col items-center justify-between bg-[#f1f1f1]">
              <span className="flex h-[15px] items-center text-[#a3a3a3]"><ChevronUp size={11} strokeWidth={4} /></span>
              <span className="mb-auto h-[768px] w-full bg-[#c1c1c1]" />
              <span className="flex h-[15px] items-center text-[#505050]"><ChevronDown size={11} strokeWidth={4} /></span>
            </div>
          </div>
        </div>
      </div>
      <Taskbar />
      <Toast />
    </div>
  );
}
